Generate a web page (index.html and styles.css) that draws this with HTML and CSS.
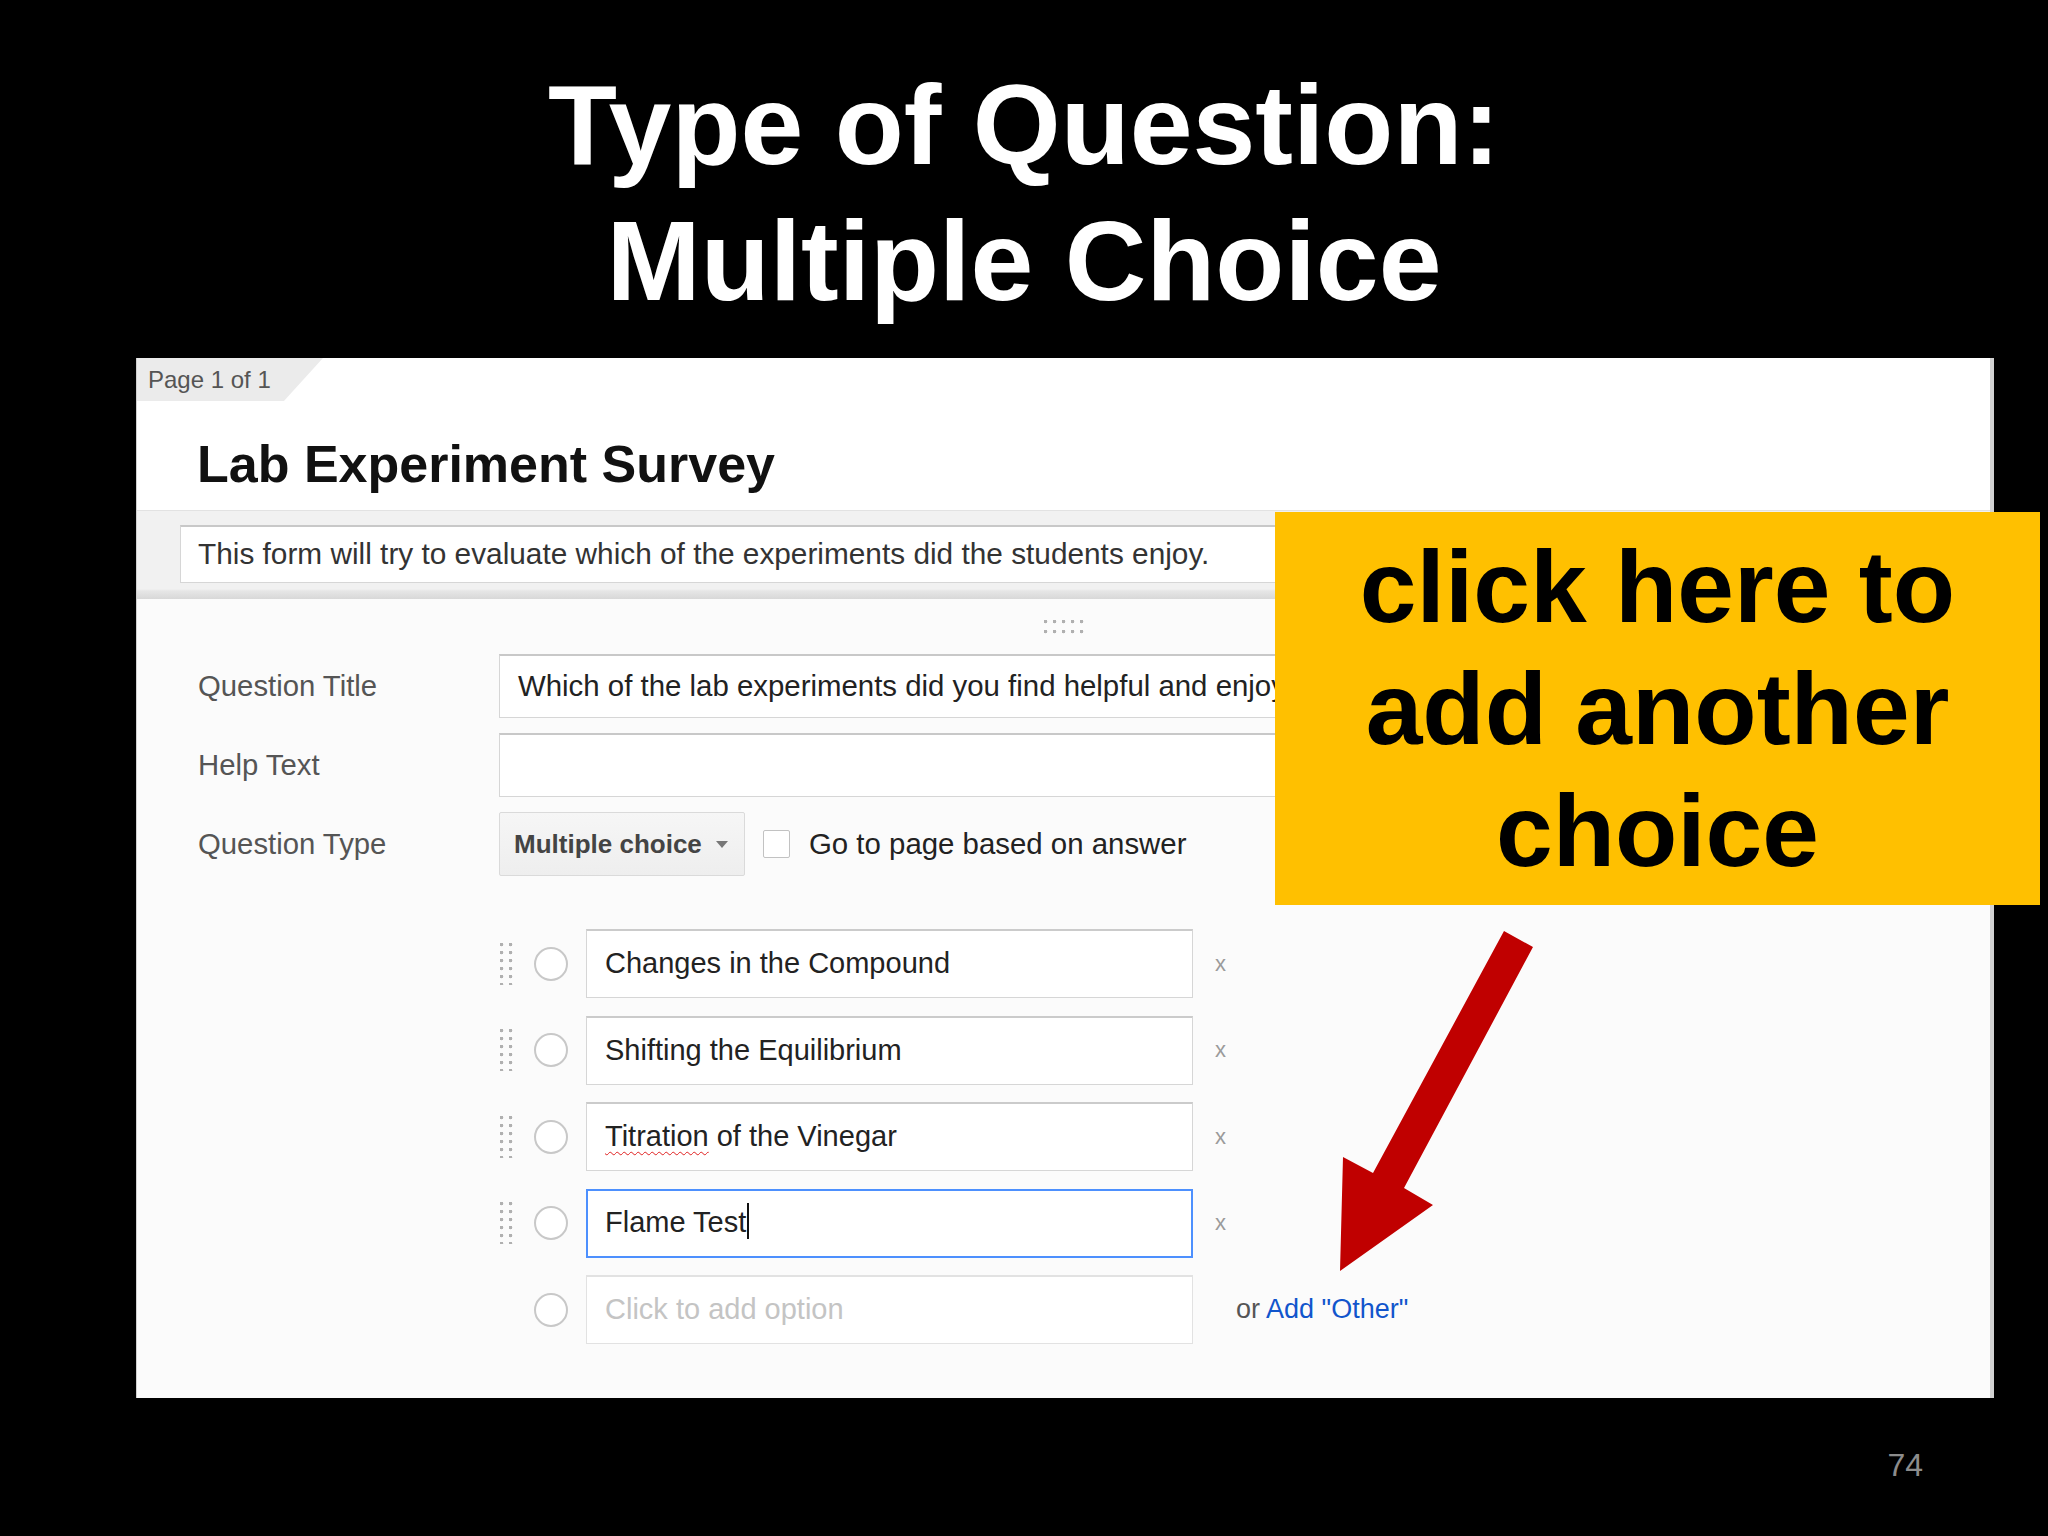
FILE: index.html
```html
<!DOCTYPE html>
<html lang="en">
<head>
<meta charset="utf-8">
<title>Type of Question: Multiple Choice</title>
<link rel="stylesheet" href="styles.css">
</head>
<body>
<div class="slide">
  <h1 class="slide-title">Type of Question:<br>Multiple Choice</h1>

  <div class="panel">
    <div class="panel-top">
      <div class="page-tab">Page 1 of 1</div>
      <div class="form-title">Lab Experiment Survey</div>
    </div>
    <div class="desc-band">
      <div class="desc-input">This form will try to evaluate which of the experiments did the students enjoy.</div>
    </div>
    <div class="question">
      <div class="grip grip-top"></div>

      <div class="field-row first">
        <div class="label">Question Title</div>
        <div class="text-input wide">Which of the lab experiments did you find helpful and enjoyable?</div>
      </div>
      <div class="field-row">
        <div class="label">Help Text</div>
        <div class="text-input wide"></div>
      </div>
      <div class="field-row">
        <div class="label">Question Type</div>
        <div class="select">Multiple choice<span class="caret"></span></div>
        <div class="checkbox"></div>
        <div class="check-label">Go to page based on answer</div>
      </div>

      <div class="options">
        <div class="option">
          <div class="grip grip-side"></div>
          <div class="radio"></div>
          <div class="opt-input">Changes in the Compound</div>
          <div class="remove">x</div>
        </div>
        <div class="option">
          <div class="grip grip-side"></div>
          <div class="radio"></div>
          <div class="opt-input">Shifting the Equilibrium</div>
          <div class="remove">x</div>
        </div>
        <div class="option">
          <div class="grip grip-side"></div>
          <div class="radio"></div>
          <div class="opt-input"><span class="misspelt">Titration</span> of the Vinegar</div>
          <div class="remove">x</div>
        </div>
        <div class="option">
          <div class="grip grip-side"></div>
          <div class="radio"></div>
          <div class="opt-input focused">Flame Test<span class="caret-line"></span></div>
          <div class="remove">x</div>
        </div>
        <div class="option">
          <div class="grip grip-side hidden"></div>
          <div class="radio"></div>
          <div class="opt-input placeholder">Click to add option</div>
          <div class="add-other">or <span class="link">Add "Other"</span></div>
        </div>
      </div>
    </div>
  </div>

  <div class="slide-number">74</div>

  <div class="callout">click here to<br>add another<br>choice</div>

  <svg class="arrow" width="210" height="360" viewBox="0 0 210 360" aria-hidden="true">
    <polygon points="174,11 203,27 74,268 103,285 10,351 13,237 43,253" fill="#c00000"/>
  </svg>
</div>
</body>
</html>
```

FILE: styles.css
```css
* { box-sizing: border-box; }

html, body {
  margin: 0;
  padding: 0;
  background: #000;
}

.slide {
  position: relative;
  width: 2048px;
  height: 1536px;
  overflow: hidden;
  background: #000;
  font-family: "Liberation Sans", Arial, sans-serif;
}

.slide-title {
  margin: 0;
  padding-top: 57px;
  color: #fff;
  font-size: 113px;
  line-height: 136px;
  font-weight: bold;
  text-align: center;
}

.panel {
  margin-top: 29px;
  margin-left: 136px;
  width: 1858px;
  height: 1040px;
  border-left: 1px solid #cfcfcf;
  border-right: 4px solid #d2d2d2;
  background: #fbfbfb;
  display: flex;
  flex-direction: column;
}

.panel-top {
  height: 152px;
  background: #fff;
}

.page-tab {
  width: 186px;
  height: 43px;
  background: #ebebeb;
  clip-path: polygon(0 0, 100% 0, 79% 100%, 0 100%);
  color: #555;
  font-size: 24px;
  line-height: 43px;
  padding-left: 11px;
}

.form-title {
  padding-left: 60px;
  padding-top: 33px;
  font-size: 52px;
  line-height: 60px;
  font-weight: bold;
  color: #111;
}

.desc-band {
  height: 89px;
  padding-top: 14px;
  padding-left: 43px;
  background: linear-gradient(#f1f1f1 0, #f1f1f1 78px, #e6e6e6 80px, #d6d6d6 89px);
  border-top: 1px solid #e2e2e2;
}

.desc-input {
  width: 1700px;
  height: 58px;
  background: #fff;
  border: 1px solid #d6d6d6;
  border-top: 2px solid #c8c8c8;
  padding-left: 17px;
  font-size: 29.8px;
  line-height: 54px;
  color: #333;
  white-space: nowrap;
  overflow: hidden;
}

.question {
  display: flex;
  flex-direction: column;
}

.grip {
  background-image: radial-gradient(circle at 1.5px 1.5px, #b0b0b0 1.6px, transparent 2.1px);
}

.grip-top {
  margin-top: 21px;
  margin-left: 907px;
  width: 44px;
  height: 14px;
  background-size: 9px 10px;
}

.field-row {
  display: flex;
  align-items: center;
  height: 64px;
  margin-top: 15px;
}

.field-row.first {
  margin-top: 20px;
}

.label {
  width: 362px;
  padding-left: 61px;
  font-size: 29.3px;
  color: #555;
}

.text-input {
  height: 100%;
  background: #fff;
  border: 1px solid #d6d6d6;
  border-top: 2px solid #c8c8c8;
  padding-left: 18px;
  font-size: 29.4px;
  line-height: 60px;
  color: #222;
  white-space: nowrap;
  overflow: hidden;
}

.text-input.wide {
  width: 1440px;
}

.select {
  height: 100%;
  width: 246px;
  display: flex;
  align-items: center;
  padding-left: 14px;
  background: linear-gradient(#f6f6f6, #eeeeee);
  border: 1px solid #dadada;
  border-radius: 2px;
  font-size: 26px;
  font-weight: bold;
  color: #444;
}

.caret {
  margin-left: 14px;
  width: 0;
  height: 0;
  border-left: 6px solid transparent;
  border-right: 6px solid transparent;
  border-top: 7px solid #777;
}

.checkbox {
  margin-left: 18px;
  width: 27px;
  height: 28px;
  background: #fff;
  border: 1px solid #c2c2c2;
  border-radius: 2px;
}

.check-label {
  margin-left: 19px;
  font-size: 29.4px;
  color: #222;
}

.options {
  margin-top: 53px;
  display: flex;
  flex-direction: column;
  gap: 17.5px;
}

.option {
  display: flex;
  align-items: center;
  height: 69px;
}

.grip-side {
  margin-left: 363px;
  width: 14px;
  height: 42px;
  background-size: 9px 8px;
}

.grip-side.hidden {
  visibility: hidden;
}

.radio {
  margin-left: 20px;
  width: 34px;
  height: 34px;
  border-radius: 50%;
  border: 2px solid #c8c8c8;
  background: #fff;
}

.opt-input {
  margin-left: 18px;
  width: 607px;
  height: 100%;
  background: #fff;
  border: 1px solid #d6d6d6;
  border-top: 2px solid #cbcbcb;
  padding-left: 18px;
  font-size: 29px;
  line-height: 64px;
  color: #222;
  white-space: nowrap;
}

.opt-input.focused {
  border: 2px solid #4d90fe;
  padding-left: 17px;
  line-height: 63px;
}

.opt-input.placeholder {
  color: #c4c4c4;
  border-color: #e2e2e2;
}

.misspelt {
  text-decoration: underline wavy #e02020;
  text-decoration-thickness: 1px;
  text-underline-offset: 5px;
  text-decoration-skip-ink: none;
}

.caret-line {
  display: inline-block;
  width: 2px;
  height: 36px;
  background: #111;
  margin-left: 1px;
  vertical-align: -7px;
}

.remove {
  margin-left: 22px;
  font-size: 22px;
  color: #9a9a9a;
}

.add-other {
  margin-left: 43px;
  font-size: 27px;
  color: #555;
  white-space: nowrap;
}

.link {
  color: #1155cc;
}

.slide-number {
  margin-top: 49px;
  padding-right: 125px;
  text-align: right;
  font-size: 32px;
  line-height: 37px;
  color: #8c8c8c;
}

.callout {
  position: absolute;
  left: 1275px;
  top: 512px;
  width: 765px;
  height: 393px;
  padding-top: 14px;
  background: #ffc000;
  color: #000;
  font-size: 102px;
  line-height: 122px;
  font-weight: bold;
  text-align: center;
}

.arrow {
  position: absolute;
  left: 1330px;
  top: 920px;
}
```
